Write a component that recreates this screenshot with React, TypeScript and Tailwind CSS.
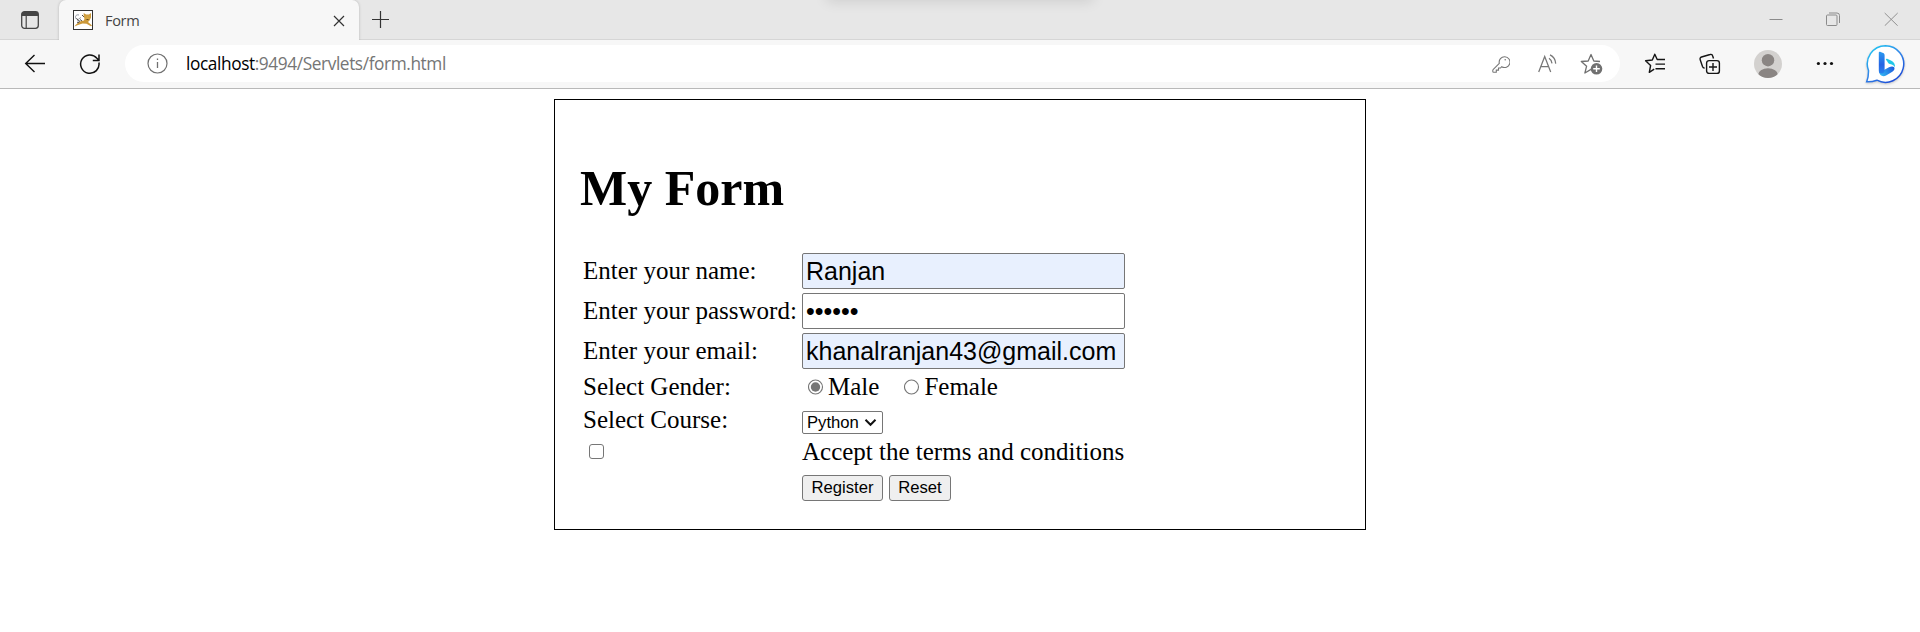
import React from "react";

function Tomcat() {
  return (
    <svg width="20" height="20" viewBox="0 0 20 20" fill="none">
      <rect x=".5" y=".5" width="19" height="19" fill="#fff" stroke="#333" />
      <path d="M6 5C2.500 4 1.500 7.500 3.500 9s2 2.500 1 3.500M8 7.500 5.500 9" stroke="#8b8f98" strokeWidth=".9" />
      <path d="M3.500 8.500 7 11.500M4 13l3-1M7 9.500 9 11M11 7 9 5" stroke="#333" strokeWidth=".9" />
      <path d="M1.500 16.500 3 14.500 8 11l3-.5.5-2-.8-2V3l2.300 1.500h3L18 3v4.500l-1.500 3L15 12l4 3.500-1 .8-4.500-2.500-4-.3-4.500 1.500Z" fill="#cb9839" />
      <path d="M12.500 7h1M15.500 7h1M13.500 9.500h2" stroke="#5c451d" strokeWidth=".9" />
      <path d="M11 5.500h6.500L16.500 9h-4Z" fill="#e2b44f" opacity=".65" />
    </svg>
  );
}

function Bing() {
  return (
    <svg className="drop-shadow-[0_1px_1px_rgba(0,0,0,0.2)]" width="40" height="40" viewBox="0 0 40 40" fill="none">
      <defs>
        <linearGradient id="ring" x1="5" y1="3" x2="30" y2="38" gradientUnits="userSpaceOnUse">
          <stop stopColor="#1fc8f2" />
          <stop offset=".5" stopColor="#3288ea" />
          <stop offset="1" stopColor="#1b49d6" />
        </linearGradient>
        <linearGradient id="stem" x1="15" y1="7" x2="17" y2="32" gradientUnits="userSpaceOnUse">
          <stop stopColor="#2a9df0" />
          <stop offset=".55" stopColor="#2463e4" />
          <stop offset="1" stopColor="#2a8cf0" />
        </linearGradient>
        <linearGradient id="foot" x1="14" y1="32" x2="30" y2="24" gradientUnits="userSpaceOnUse">
          <stop stopColor="#35c3f5" />
          <stop offset="1" stopColor="#1c55dc" />
        </linearGradient>
      </defs>
      <path d="M20.500 1.700a18.300 18.300 0 1 1-8.600 34.500c-3 1.100-6.700 1.700-10.200 1.600C3 34.500 3.600 31 3.500 26.500A18.300 18.300 0 0 1 20.500 1.700Z" fill="#fff" stroke="url(#ring)" strokeWidth="1.500" />
      <path d="M20.800 15.500c0-.7.700-1 1.400-.7l3.800 1.700c3 1.400 4.300 3.700 4 7-.7-2-2.500-2.700-5-3.400-1.500-.4-2.200-1.400-2.700-2.600Z" fill="#22c7e9" />
      <path d="M14.500 28.500 24 23.300c3.500-1.500 5.500-.5 5.500 1.300 0 1.300-.9 2.400-2.200 3.200l-5.800 3.500c-3.500 2-7.300.3-7-3Z" fill="url(#foot)" />
      <path d="M13.800 8.500c0-.7.600-1 1.300-.7l3 1.300c1 .4 1.500 1.200 1.500 2.300v15.500c0 2.500-5 3.500-5.500 1.700-.2-.8-.3-1.500-.3-2.500Z" fill="url(#stem)" />
    </svg>
  );
}

function TabStrip() {
  return (
    <div className="relative flex h-10 items-stretch overflow-hidden bg-[#e7e7e7] shadow-[inset_0_-1px_0_#d6d6d6]">
      <div className="absolute -top-3 left-[830px] h-2.5 w-[260px] shadow-[0_0_14px_3px_rgba(0,0,0,0.12)]" />
      <div className="flex w-[59px] pl-[21px] pt-[11px]">
        <svg width="18" height="18" viewBox="0 0 18 18" fill="none">
          <rect x=".7" y=".7" width="16.600" height="16.600" rx="2.800" stroke="#454545" strokeWidth="1.300" />
          <path d="M.7 5V3.500A2.800 2.800 0 0 1 3.500.7h11a2.800 2.800 0 0 1 2.800 2.800V5Z" fill="#454545" />
          <path d="M5.200 5v12" stroke="#454545" strokeWidth="1.200" />
        </svg>
      </div>
      <div className="relative flex w-[300px] items-center rounded-t-[7px] bg-[#f7f7f7] pl-[14px] shadow-[0_0_3px_rgba(0,0,0,0.22)]">
        <Tomcat />
        <span className="-mt-px ml-3 flex-1 text-[14.6px] leading-5 tracking-[-0.35px] text-[#444]">Form</span>
        <svg className="mr-[14px] mt-px" width="12" height="12" viewBox="0 0 12 12">
          <path d="m1 1 10 10M11 1 1 11" stroke="#333" strokeWidth="1.200" />
        </svg>
      </div>
      <svg className="ml-3 mt-[10px]" width="19" height="19" viewBox="0 0 19 19">
        <path d="M9.500 1v17M1 9.500h17" stroke="#333" strokeWidth="1.200" />
      </svg>
      <div className="ml-auto flex items-start gap-11 pr-[22px] pt-3">
        <svg className="-mr-px" width="14" height="14" viewBox="0 0 14 14"><path d="M.5 7.500h13" stroke="#8b8b8b" /></svg>
        <svg width="14" height="14" viewBox="0 0 14 14" fill="none" stroke="#8b8b8b">
          <rect x=".5" y="3" width="10.500" height="10.500" rx="1" />
          <path d="M3 1h8a2.500 2.500 0 0 1 2.500 2.500v7.500" />
        </svg>
        <svg width="14" height="14" viewBox="0 0 14 14"><path d="m.7 1 13 12.800M13.700 1 .7 13.800" stroke="#909090" /></svg>
      </div>
    </div>
  );
}

function Toolbar() {
  return (
    <div className="flex h-[49px] items-start border-b border-[#b9b9b9] bg-[#f7f7f7] pt-[5px]">
      <svg className="ml-6 mt-[9px]" width="22" height="20" viewBox="0 0 22 20" fill="none">
        <path d="M21 9.500H2M10.500 1 1.700 9.500l8.800 8.500" stroke="#111" strokeWidth="1.400" />
      </svg>
      <svg className="ml-[33px] mt-[8px]" width="22" height="22" viewBox="0 0 22 22" fill="none">
        <path d="M19.900 9.500a9.200 9.200 0 1 1-2-4.300l2 2M20 1.500v6h-6.200" stroke="#111" strokeWidth="1.500" />
      </svg>
      <div className="ml-[24px] flex h-[37px] w-[1495px] items-center rounded-full bg-white pl-[22px] pr-[16px]">
        <svg width="21" height="21" viewBox="0 0 21 21" fill="none" stroke="#707070">
          <circle cx="10.500" cy="10.500" r="9.500" strokeWidth="1.200" />
          <path d="M10.500 9v6M10.500 5.500v1.600" strokeWidth="1.300" />
        </svg>
        <span className="ml-[18px] text-[17.300px] leading-6 tracking-[-0.41px] text-[#757575]">
          <span className="text-black">localhost</span>:9494/Servlets/form.html
        </span>
        <div className="ml-auto flex items-center">
          <svg width="18" height="18" viewBox="0 0 18 18" fill="none" stroke="#777" strokeWidth="1.100">
            <path d="m7.300 8.300-6 6c-.4.400-.5.600-.5 1v1.200c0 .5.300.8.800.8h2.700v-2.200h2.200V13h2l1.200-1.300a5.400 5.400 0 1 0-2.400-3.400Z" />
            <circle cx="13.200" cy="4.800" r=".8" fill="#777" stroke="none" />
          </svg>
          <svg className="ml-[27px]" width="21" height="20" viewBox="0 0 21 20" fill="none" stroke="#777" strokeWidth="1.250">
            <path d="m1.700 18 6-15.500 6 15.500M3.800 12.500h7.900M12 4.200c1.700 1 2.800 3 3 5.200M13 .9c3.500 1.700 5.500 4.800 5.700 8.700" />
          </svg>
          <svg className="ml-[22px] mt-[2px]" width="24" height="24" viewBox="0 0 24 24" fill="none">
            <path d="M20 8.500 13.800 8 11 1.500 8.200 8 1.300 8.500l5.300 4.700-1.700 6.800 6.100-3.600" stroke="#707070" strokeWidth="1.300" strokeLinejoin="round" />
            <circle cx="16.500" cy="15.800" r="5.800" fill="#707070" />
            <path d="M16.500 12.500v6.600M13.200 15.800h6.600" stroke="#fff" strokeWidth="1.400" />
          </svg>
        </div>
      </div>
      <svg className="ml-6 mt-2" width="22" height="22" viewBox="0 0 22 22" fill="none" stroke="#151515" strokeWidth="1.400">
        <path d="m19.500 6.600-6.300-.1L10.800 1.200 8.300 7l-6.700.8 5 4.700-1.300 6.800 4.900-3.100M11.500 11.100H21M13.500 6.500H21M11.500 15.700H21" strokeLinejoin="round" />
      </svg>
      <svg className="ml-[33px] mr-px mt-[8px]" width="22" height="22" viewBox="0 0 22 22" fill="none" stroke="#151515" strokeWidth="1.400">
        <rect x="7.600" y="7.600" width="12.800" height="12.800" rx="2.500" />
        <path d="M14 10v8M10 14h8M14.500 5.500 13.700 3a2 2 0 0 0-2.600-1.500L2.500 4A2 2 0 0 0 1.200 6.700L3.500 13.500c.4 1.100 1 1.600 2.100 1.500" />
      </svg>
      <svg className="ml-[32px] mt-[5px]" width="28" height="28" viewBox="0 0 28 28">
        <clipPath id="avatar"><circle cx="14" cy="14" r="14" /></clipPath>
        <g clipPath="url(#avatar)">
          <path d="M0 0h28v28H0Z" fill="#d3d1cf" />
          <circle cx="14" cy="10.200" r="6.200" fill="#8a8583" />
          <ellipse cx="14" cy="25" rx="10" ry="6.700" fill="#8a8583" />
        </g>
      </svg>
      <svg className="ml-[34px] mt-[16px]" width="18" height="5" viewBox="0 0 18 5" fill="#111">
        <circle cx="2.400" cy="2.500" r="1.600" /><circle cx="9" cy="2.500" r="1.600" /><circle cx="15.500" cy="2.500" r="1.600" />
      </svg>
      <div className="-mt-px ml-[31px]"><Bing /></div>
    </div>
  );
}

function Radio({ label, checked }: { label: string; checked?: boolean }) {
  return (
    <label className="flex items-center gap-[4px]">
      <svg width="16" height="16" viewBox="0 0 16 16">
        <circle cx="7.500" cy="8" r="7" fill="#fff" stroke="#767676" strokeWidth="1.100" />
        {checked && <circle cx="7.500" cy="8" r="4.700" fill="#767676" />}
      </svg>
      {label}
    </label>
  );
}

const field =
  "block h-9 w-[323px] rounded-[2px] border border-[#767676] px-[3px] font-['Liberation_Sans',Arial,sans-serif] text-[25px] leading-[34px] text-black outline-none";
const button =
  "h-[26px] rounded-[3px] border border-[#767676] bg-[#efefef] text-center font-['Liberation_Sans',Arial,sans-serif] text-[16.67px] leading-[22px] text-black";

function Row({ label, className, children }: { label: React.ReactNode; className: string; children: React.ReactNode }) {
  return (
    <div className={"flex items-center " + className}>
      <div className="w-[219px] shrink-0 whitespace-nowrap">{label}</div>
      {children}
    </div>
  );
}

export default function App() {
  return (
    <div className="h-[632px] overflow-hidden bg-white font-['Open_Sans','Noto_Sans',sans-serif]">
      <TabStrip />
      <Toolbar />
      <form className="mx-auto mt-[10px] h-[431px] w-[812px] border border-black pl-[25px] pt-[60px] font-['Liberation_Serif','Times_New_Roman',serif] text-[25px] leading-[28px] text-black">
        <h1 className="h-[93px] text-[50px] font-bold leading-[56px]">My Form</h1>
        <div className="pl-[3px]">
          <Row label="Enter your name:" className="mb-1 h-9">
            <input className={field + " bg-[#e8f0fe]"} defaultValue="Ranjan" />
          </Row>
          <Row label="Enter your password:" className="mb-1 h-9">
            <input type="password" className={field + " bg-white"} defaultValue="ranjan" />
          </Row>
          <Row label="Enter your email:" className="mb-0.5 h-9">
            <input className={field + " bg-[#e8f0fe]"} defaultValue="khanalranjan43@gmail.com" />
          </Row>
          <Row label="Select Gender:" className="mb-[3px] h-[31px]">
            <div className="flex gap-[25px] pl-[6px]">
              <Radio label="Male" checked />
              <Radio label="Female" />
            </div>
          </Row>
          <Row label="Select Course:" className="mb-[3px] h-[29px]">
            <div className="flex h-[23px] w-[81px] items-center self-end rounded-[2px] border border-[#767676] bg-white pl-[4px] font-['Liberation_Sans',Arial,sans-serif] text-[16.67px] leading-[21px]">
              Python
              <svg className="ml-[5px]" width="13" height="9" viewBox="0 0 13 9" fill="none">
                <path d="m1.500 1.800 5 5 5-5" stroke="#111" strokeWidth="2" />
              </svg>
            </div>
          </Row>
          <Row
            label={<div className="ml-[6px] h-[15px] w-[15px] rounded-[3px] border border-[#767676] bg-white" />}
            className="mb-[9px] h-[29px]"
          >
            <span>Accept the terms and conditions</span>
          </Row>
          <Row label="" className="h-[26px]">
            <button type="button" className={button + " w-[81px]"}>Register</button>
            <button type="button" className={button + " ml-[6px] w-[62px]"}>Reset</button>
          </Row>
        </div>
      </form>
    </div>
  );
}
